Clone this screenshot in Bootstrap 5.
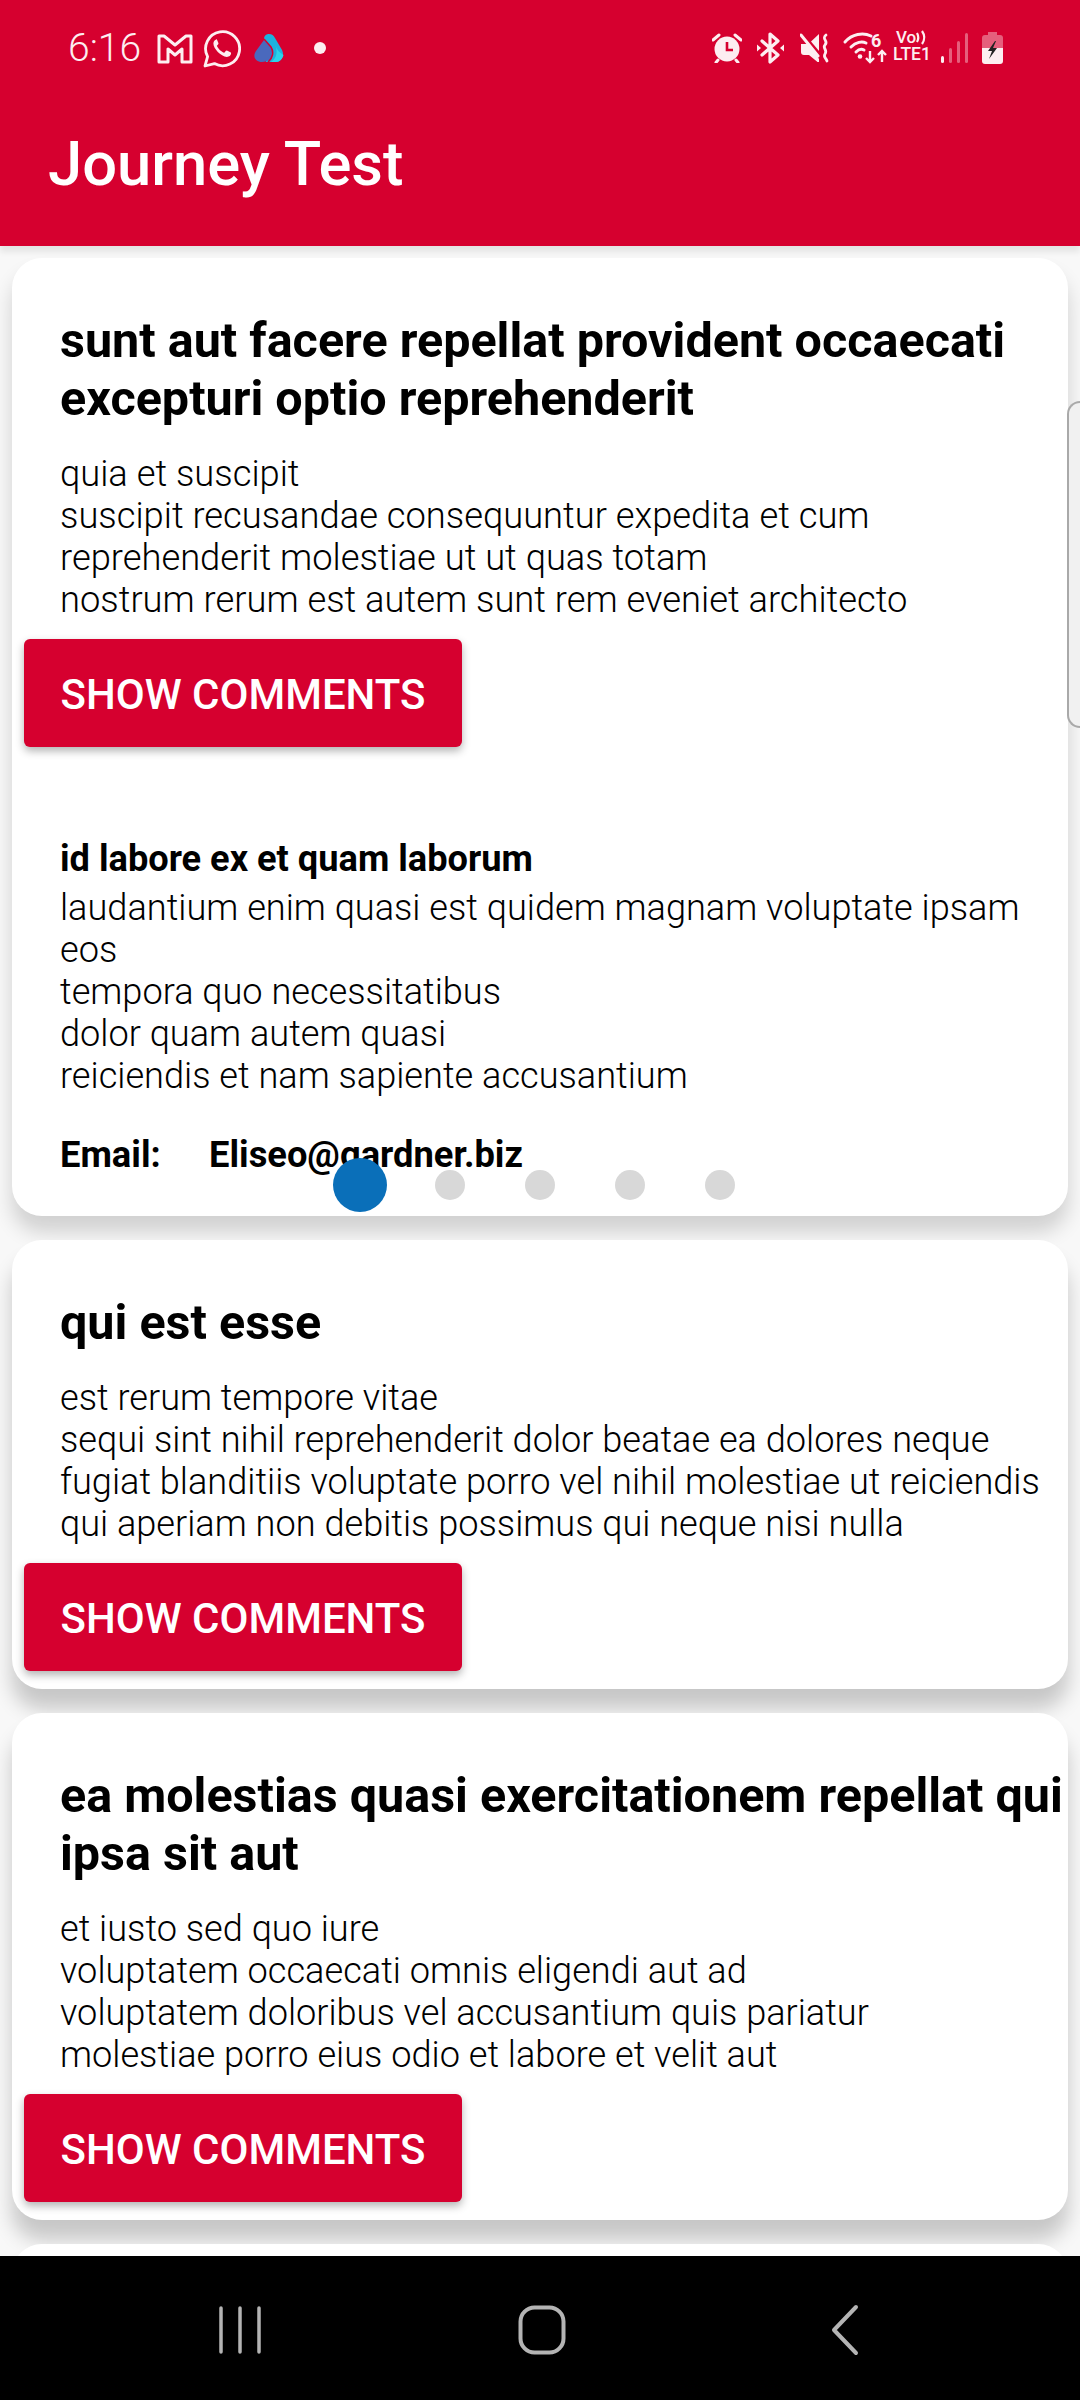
<!DOCTYPE html>
<html lang="en">
<head>
    <meta charset="UTF-8">
    <meta name="viewport" content="width=device-width, initial-scale=1.0">
    <title>Journey Test</title>
    <link href="https://cdn.jsdelivr.net/npm/bootstrap@5.3.0/dist/css/bootstrap.min.css" rel="stylesheet">
    <script src="https://cdn.jsdelivr.net/npm/bootstrap@5.3.0/dist/js/bootstrap.bundle.min.js"></script>
    <style>
        html, body {
            margin: 0;
            background-color: #000;
        }
        body {
            font-family: Roboto, "Liberation Sans", sans-serif;
        }
        .phone {
            width: 1080px;
            height: 2400px;
            position: relative;
            overflow: hidden;
        }
        .app-head {
            height: 246px;
            flex: none;
            background-color: #d6002f;
            color: #fff;
            z-index: 2;
            box-shadow: 0 6px 6px rgba(0, 0, 0, .08);
        }
        .status-row {
            height: 96px;
            padding: 29px 0 0 68px;
            color: #fdeef1;
        }
        .status-time {
            font-size: 39px;
            line-height: 39px;
            font-weight: 300;
            width: 89px;
        }
        .status-row svg {
            display: block;
            flex: none;
        }
        .lte-box {
            width: 40px;
            margin-left: 4px;
            font-weight: 500;
            text-align: center;
            line-height: 1;
        }
        .lte-top {
            font-size: 17px;
            height: 17px;
        }
        .lte-bottom {
            font-size: 17.5px;
        }
        .app-title {
            font-size: 61.5px;
            line-height: 68px;
            font-weight: 500;
            margin: 0;
            padding: 34px 0 0 48px;
        }
        .feed {
            flex: 1 1 auto;
            min-height: 0;
            overflow: hidden;
            background-color: #f8f8f8;
            padding: 12px 12px 0;
        }
        .post-card {
            border: 0;
            border-radius: 30px;
            background-color: #fff;
            box-shadow: 0 20px 20px rgba(0, 0, 0, .2);
            margin-bottom: 24px;
            position: relative;
            padding-bottom: 18px;
        }
        .post-card.first-post {
            box-shadow: 0 16px 20px rgba(0, 0, 0, .16);
        }
        .post-title {
            font-size: 48.5px;
            line-height: 58px;
            font-weight: 700;
            color: #000;
            margin: 0;
            padding: 54px 0 0 48px;
        }
        .post-text {
            font-size: 36.15px;
            line-height: 42px;
            font-weight: 300;
            color: #000;
            margin: 0;
            padding: 25px 0 0 48px;
        }
        .first-post .post-text {
            font-size: 36.3px;
        }
        .btn-comments {
            --bs-btn-padding-x: 0;
            --bs-btn-padding-y: 0;
            --bs-btn-border-width: 0;
            display: block;
            width: 438px;
            height: 108px;
            margin: 18px 0 0 12px;
            padding-top: 2px;
            background-color: #d6002f;
            color: #fff;
            border-radius: 6px;
            font-size: 42px;
            font-weight: 500;
            box-shadow: 0 4px 8px rgba(0, 0, 0, .3);
        }
        .btn-comments:hover {
            background-color: #d6002f;
            color: #fff;
        }
        .comment-block {
            padding: 87px 0 0 48px;
            color: #000;
        }
        .comment-name {
            font-size: 36.2px;
            line-height: 50px;
            font-weight: 700;
            padding-bottom: 3px;
        }
        .comment-text {
            font-size: 36.15px;
            line-height: 42px;
            font-weight: 300;
        }
        .comment-mail {
            font-size: 36.3px;
            line-height: 42px;
            font-weight: 700;
            padding-top: 37px;
            height: 101px;
        }
        .mail-label {
            width: 149px;
        }
        .pager {
            position: absolute;
            left: 321px;
            top: 900px;
            gap: 60px;
            height: 54px;
        }
        .pager-dot {
            width: 30px;
            height: 30px;
            border-radius: 50%;
            background-color: #d8d8d8;
        }
        .pager-dot.is-on {
            width: 54px;
            height: 54px;
            background-color: #0a6fb9;
            margin-right: -12px;
        }
        .scroll-handle {
            position: absolute;
            right: 0;
            top: 401px;
            width: 13px;
            height: 327px;
            background-color: #f1f1f1;
            border: 2px solid #a9a9a9;
            border-right: 0;
            border-radius: 14px 0 0 14px;
            z-index: 3;
        }
        .sys-nav {
            height: 144px;
            flex: none;
            background-color: #000;
            z-index: 2;
            padding: 4px 0 0 219px;
        }
        .empty-card {
            height: 200px;
        }
    </style>
</head>
<body>
    <div class="phone d-flex flex-column">
        <header class="app-head">
            <div class="status-row d-flex align-items-start">
                <div class="status-time">6:16</div>
                <!-- gmail outline -->
                <svg width="36" height="30" viewBox="0 0 36 30" style="margin-top:5px">
                    <path d="M2 2h5l11 9 11-9h5v26h-9V15l-7 6-7-6v13H2z" fill="none" stroke="#fdeef1" stroke-width="3" stroke-linejoin="round"/>
                </svg>
                <!-- whatsapp -->
                <svg width="38" height="38" viewBox="0 0 38 38" style="margin-left:10px;margin-top:1px">
                    <path d="M2 36l2.600-9.300A17 17 0 1 1 11.400 33.600z" fill="none" stroke="#fdeef1" stroke-width="2.800" stroke-linejoin="round"/>
                    <path d="M13.200 9.600c-1.200.3-2.800 2-2.800 4 0 5 7.300 13 13.500 13.400 2.300 0 4-1.600 4.200-3.400l-.2-1-4-2-1 .2-1.600 2c-2.600-.6-6.200-4-7.400-7l1.500-1.800v-1l-1.700-3.900z" fill="#fdeef1"/>
                </svg>
                <!-- drop app -->
                <svg width="30" height="28" viewBox="0 0 30 28" style="margin-left:13px;margin-top:5px">
                    <path d="M10 5C10 1 13 0 15 0c3 0 4.500 1.500 6 4l7 12c3 6-1 12-6 12H12z" fill="#1cb2de"/>
                    <path d="M17 28c6-4 7-11 4-17 2 5 5 8 8.500 10-1 4-4 7-7.500 7z" fill="#2bd4ea"/>
                    <path d="M10 6L2 17c-4 6 0 11 6 11s12-4 11-11c-.5-3-5-7-9-11z" fill="#4a69bd"/>
                    <path d="M10 5l7 8c3 5 2 11-3 15" fill="none" stroke="#d6002f" stroke-width="1.500"/>
                </svg>
                <svg width="12" height="12" viewBox="0 0 12 12" style="margin-left:30px;margin-top:13px">
                    <circle cx="6" cy="6" r="6" fill="#fdeef1"/>
                </svg>

                <div class="d-flex align-items-start ms-auto">
                    <!-- alarm -->
                    <svg width="30" height="30" viewBox="0 0 30 30" style="margin-top:4px">
                        <circle cx="15" cy="16" r="12.500" fill="#fdeef1"/>
                        <path d="M15 9v8h6" fill="none" stroke="#d6002f" stroke-width="2.600"/>
                        <path d="M1 7l6-5M29 7l-6-5M6 27l-2 2.500M24 27l2 2.500" stroke="#fdeef1" stroke-width="3" stroke-linecap="round"/>
                    </svg>
                    <!-- bluetooth -->
                    <svg width="27" height="32" viewBox="0 0 27 32" style="margin-left:15px;margin-top:3px">
                        <path d="M5 9l16 14-8 7V2l8 7L5 23" fill="none" stroke="#fdeef1" stroke-width="3.200" stroke-linejoin="round" stroke-linecap="round"/>
                        <path d="M0 12.500l4 3.500-4 3.500zM27 12.500l-4 3.500 4 3.500z" fill="#fdeef1"/>
                    </svg>
                    <!-- vibrate / mute -->
                    <svg width="30" height="30" viewBox="0 0 30 30" style="margin-left:16px;margin-top:4px">
                        <path d="M1 11h7l2.500 1.500L19 26v3h-1.500L9 22H4a3 3 0 0 1-3-3z" fill="#fdeef1"/>
                        <path d="M11 8.500L19 1v17z" fill="#fdeef1"/>
                        <path d="M1 2l17 21" stroke="#fdeef1" stroke-width="3" stroke-linecap="round"/>
                        <path d="M26 2c-5 4 3 6-1 10-3 3 3 5 0 9-2 3 1 4 2 7" fill="none" stroke="#fdeef1" stroke-width="2.800" stroke-linecap="round"/>
                    </svg>
                    <!-- wifi 6 with arrows, the digit stays real text -->
                    <svg width="44" height="32" viewBox="0 0 44 32" style="margin-left:14px;margin-top:3px;overflow:visible">
                        <path d="M1 10c7-8 18-10 26-6" fill="none" stroke="#fdeef1" stroke-width="3" stroke-linecap="round"/>
                        <path d="M7 15c5-5 11-6 15-4" fill="none" stroke="#fdeef1" stroke-width="3" stroke-linecap="round"/>
                        <path d="M12 20c3-3 6-3 8-2" fill="none" stroke="#fdeef1" stroke-width="3" stroke-linecap="round"/>
                        <circle cx="16" cy="24.500" r="2.300" fill="#fdeef1"/>
                        <text x="27" y="15" font-family="Roboto, sans-serif" font-size="18" font-weight="700" fill="#fdeef1">6</text>
                        <path d="M26 19v11M22 26l4 4 4-4M38 30V19M34 23l4-4 4 4" fill="none" stroke="#fdeef1" stroke-width="2.400"/>
                    </svg>
                    <div class="lte-box">
                        <div class="lte-top d-flex justify-content-center align-items-center">Vo<svg width="12" height="15" viewBox="0 0 12 15"><path d="M1 3q2.500 4.500 0 9M6 1q4.500 6.500 0 13" fill="none" stroke="#fdeef1" stroke-width="2.200"/></svg></div>
                        <div class="lte-bottom">LTE1</div>
                    </div>
                    <!-- signal -->
                    <svg width="28" height="30" viewBox="0 0 28 30" style="margin-left:8px;margin-top:4px">
                        <rect x="1" y="23" width="3" height="7" rx="1.500" fill="#fdeef1"/>
                        <rect x="9" y="15" width="3" height="15" rx="1.500" fill="#fdeef1" fill-opacity=".4"/>
                        <rect x="17" y="8" width="3" height="22" rx="1.500" fill="#fdeef1" fill-opacity=".4"/>
                        <rect x="25" y="0" width="3" height="30" rx="1.500" fill="#fdeef1" fill-opacity=".4"/>
                    </svg>
                    <!-- battery -->
                    <svg width="21" height="32" viewBox="0 0 21 32" style="margin-left:14px;margin-top:3px;margin-right:77px">
                        <path d="M6 0h9v3H6z" fill="#fdeef1" fill-opacity=".4"/>
                        <path d="M3 3h15a3 3 0 0 1 3 3v10H0V6a3 3 0 0 1 3-3z" fill="#fdeef1" fill-opacity=".4"/>
                        <path d="M0 16h21v13a3 3 0 0 1-3 3H3a3 3 0 0 1-3-3z" fill="#fdeef1"/>
                        <path d="M13 9l-7 10h4l-3 8 8-11h-4l3-7z" fill="#222"/>
                    </svg>
                </div>
            </div>
            <h1 class="app-title">Journey Test</h1>
        </header>

        <main class="feed">
            <div class="card post-card first-post">
                <h5 class="post-title">sunt aut facere repellat provident occaecati<br>excepturi optio reprehenderit</h5>
                <p class="post-text">quia et suscipit<br>suscipit recusandae consequuntur expedita et cum<br>reprehenderit molestiae ut ut quas totam<br>nostrum rerum est autem sunt rem eveniet architecto</p>
                <button type="button" class="btn btn-comments">SHOW COMMENTS</button>
                <div class="comment-block">
                    <div class="comment-name">id labore ex et quam laborum</div>
                    <div class="comment-text">laudantium enim quasi est quidem magnam voluptate ipsam<br>eos<br>tempora quo necessitatibus<br>dolor quam autem quasi<br>reiciendis et nam sapiente accusantium</div>
                    <div class="comment-mail d-flex"><span class="mail-label">Email:</span><span>Eliseo@gardner.biz</span></div>
                </div>
                <div class="pager d-flex align-items-center">
                    <span class="pager-dot is-on"></span>
                    <span class="pager-dot"></span>
                    <span class="pager-dot"></span>
                    <span class="pager-dot"></span>
                    <span class="pager-dot"></span>
                </div>
            </div>

            <div class="card post-card">
                <h5 class="post-title">qui est esse</h5>
                <p class="post-text">est rerum tempore vitae<br>sequi sint nihil reprehenderit dolor beatae ea dolores neque<br>fugiat blanditiis voluptate porro vel nihil molestiae ut reiciendis<br>qui aperiam non debitis possimus qui neque nisi nulla</p>
                <button type="button" class="btn btn-comments">SHOW COMMENTS</button>
            </div>

            <div class="card post-card">
                <h5 class="post-title">ea molestias quasi exercitationem repellat qui<br>ipsa sit aut</h5>
                <p class="post-text">et iusto sed quo iure<br>voluptatem occaecati omnis eligendi aut ad<br>voluptatem doloribus vel accusantium quis pariatur<br>molestiae porro eius odio et labore et velit aut</p>
                <button type="button" class="btn btn-comments">SHOW COMMENTS</button>
            </div>

            <div class="card post-card empty-card"></div>
        </main>

        <div class="scroll-handle"></div>

        <nav class="sys-nav d-flex align-items-center">
            <svg width="44" height="48" viewBox="0 0 44 48">
                <path d="M2 2v44M21 2v44M40 2v44" stroke="#b4b4b4" stroke-width="3.500" stroke-linecap="round"/>
            </svg>
            <svg width="48" height="50" viewBox="0 0 48 50" style="margin-left:255px">
                <rect x="2.500" y="2.500" width="43" height="45" rx="14" fill="none" stroke="#b4b4b4" stroke-width="4"/>
            </svg>
            <svg width="28" height="52" viewBox="0 0 28 52" style="margin-left:265px">
                <path d="M25 3L3 26l22 23" fill="none" stroke="#b4b4b4" stroke-width="4" stroke-linecap="round" stroke-linejoin="round"/>
            </svg>
        </nav>
    </div>
</body>
</html>
